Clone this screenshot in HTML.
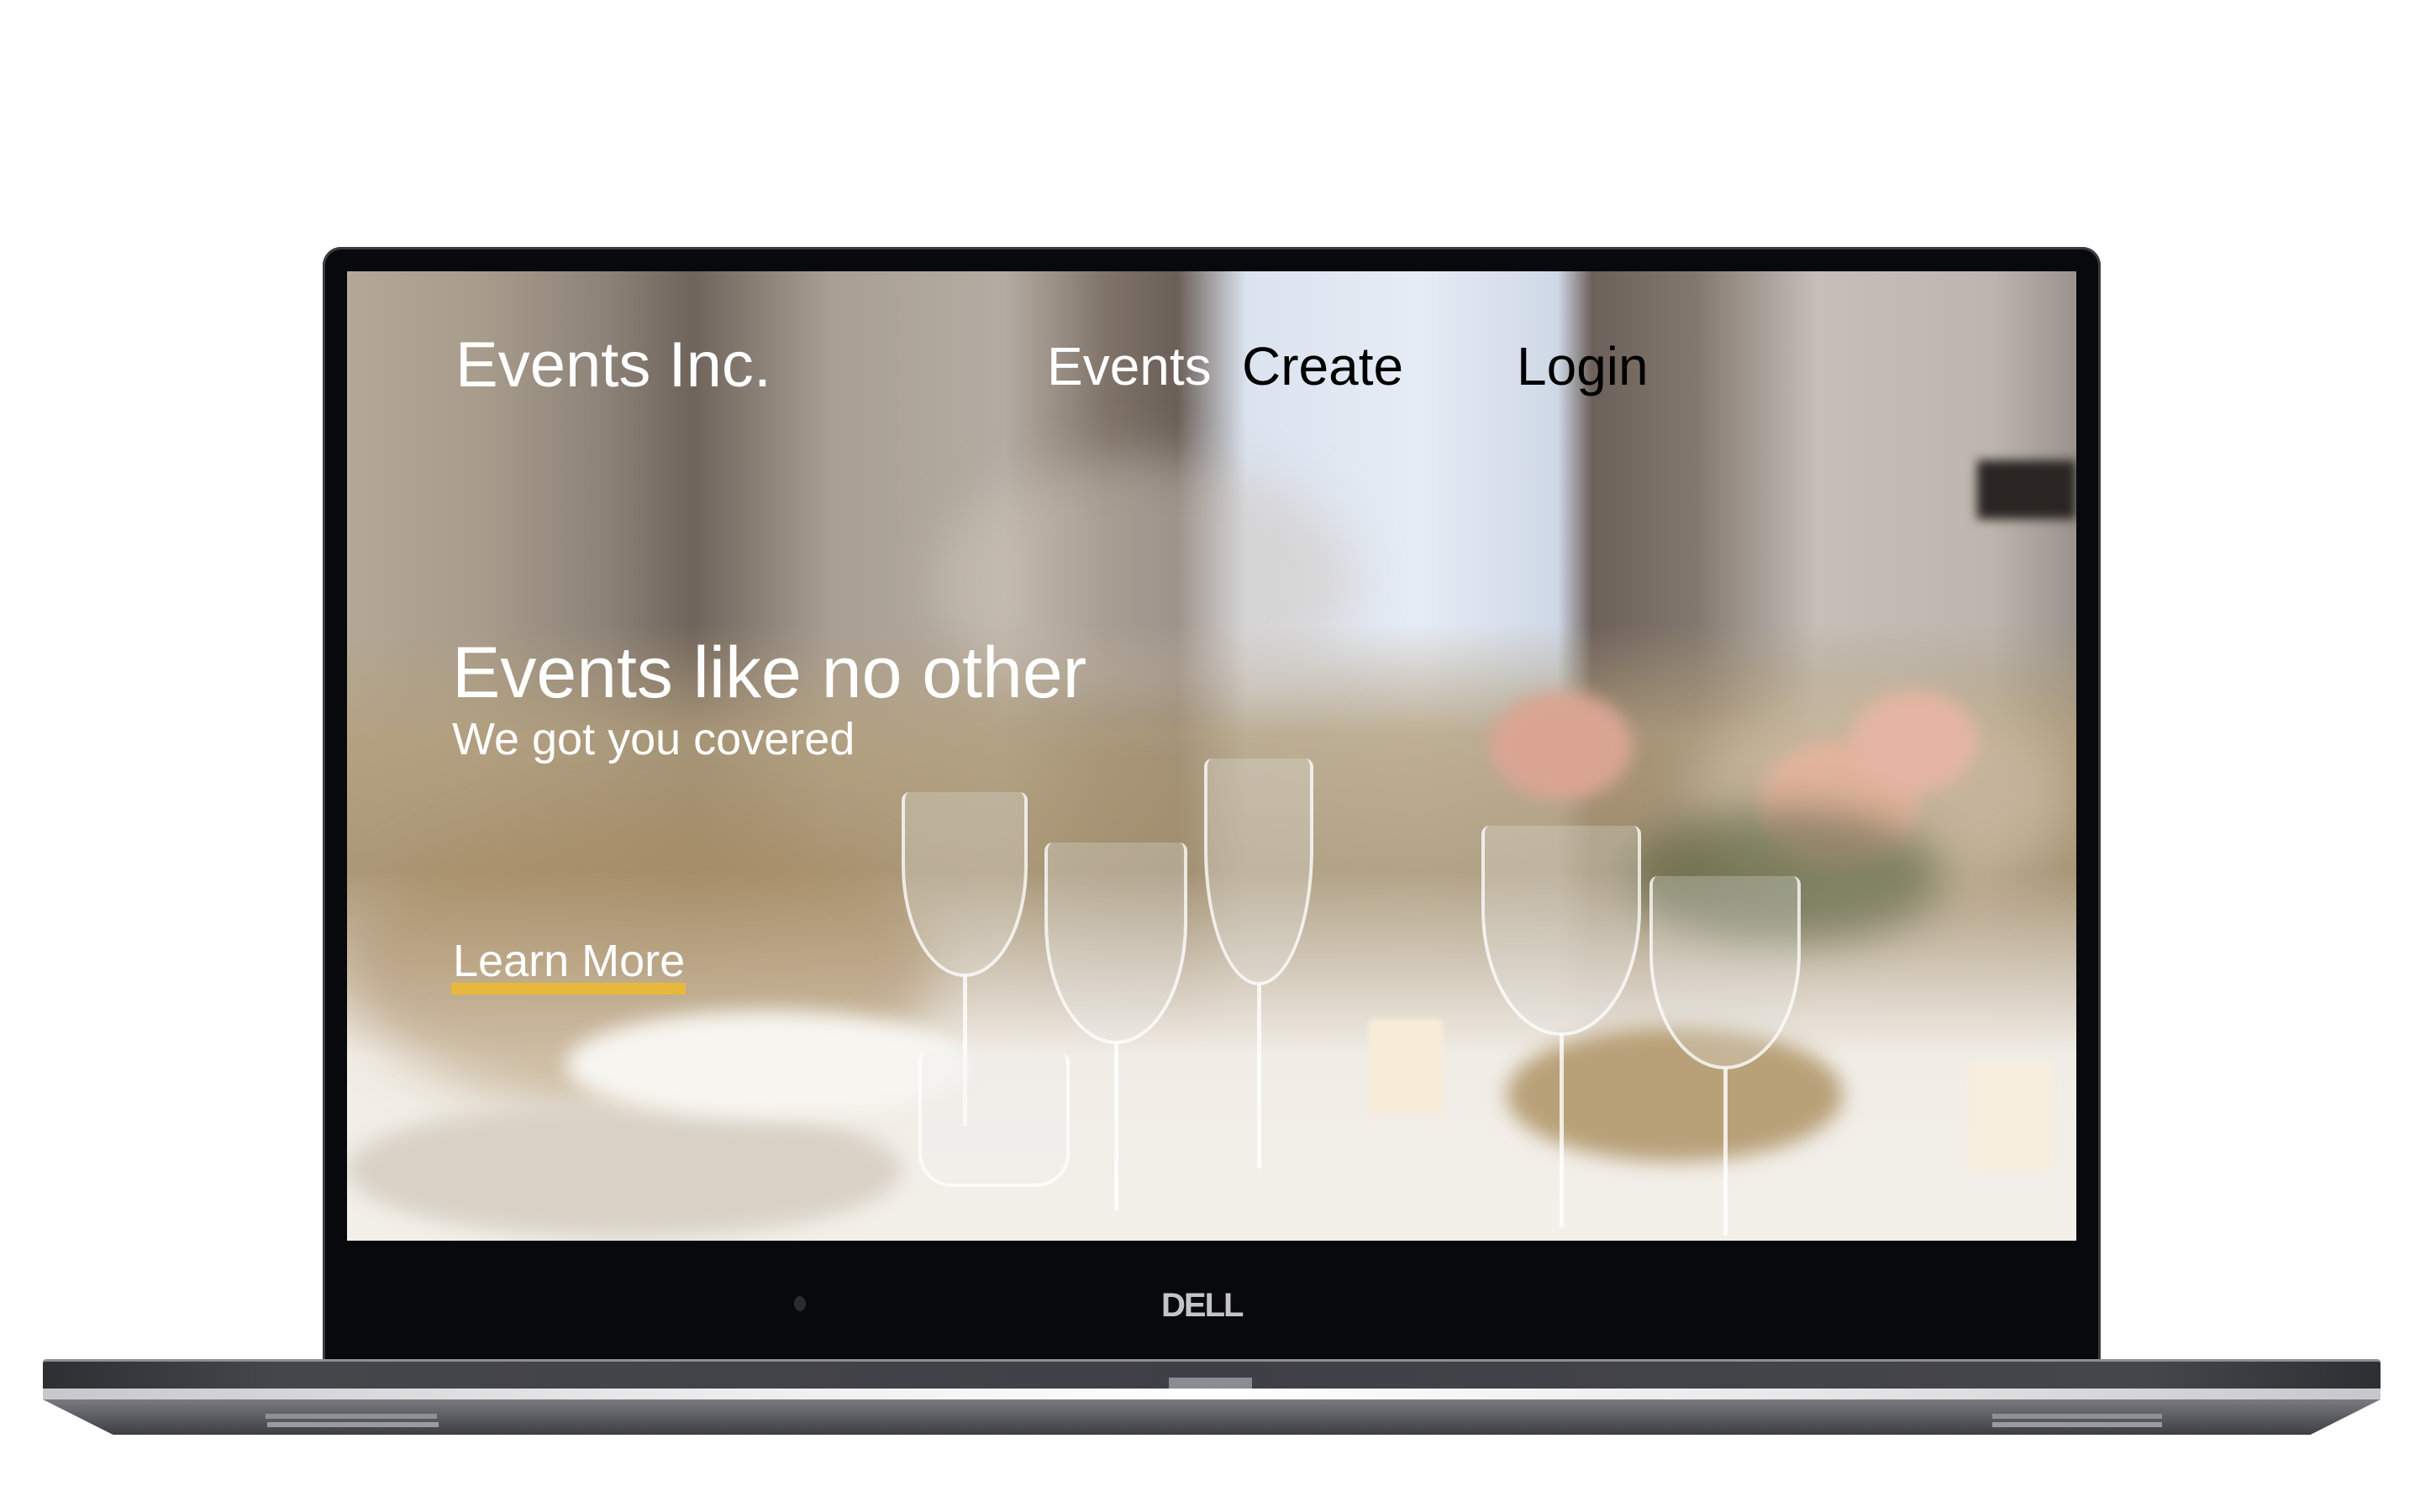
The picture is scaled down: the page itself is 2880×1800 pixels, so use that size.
<!DOCTYPE html>
<html><head><meta charset="utf-8"><style>
*{margin:0;padding:0;box-sizing:border-box}
body{width:2880px;height:1800px;background:#fff;position:relative;overflow:hidden;font-family:"Liberation Sans",Arial,sans-serif}
.abs{position:absolute}
#bezel{left:384px;top:294px;width:2116px;height:1330px;background:#08090c;border-radius:22px 22px 8px 8px;box-shadow:inset 0 0 0 3px #3b3c40}
#screen{left:413px;top:323px;width:2058px;height:1154px;overflow:hidden;background:#cfc6b8}
.b{position:absolute;border-radius:50%;filter:blur(30px)}
.t{position:absolute;white-space:nowrap;line-height:1}
.g{position:absolute;border:4px solid rgba(255,255,255,.75);border-top:none;border-radius:10px 10px 50% 50%/10px 10px 60% 60%;background:rgba(235,238,240,.25)}
.s{position:absolute;width:5px;background:rgba(255,255,255,.8)}
</style></head><body>
<div id="bezel" class="abs"></div>
<div id="screen" class="abs">
  <div class="abs" style="left:0;top:0;width:2058px;height:1154px;background:linear-gradient(90deg,#b3a898 0%,#a79b8b 8%,#8c8278 15%,#6f645b 20%,#a99f94 28%,#b4aca2 38%,#7f7369 44%,#6a5f58 48%,#dbe3ef 52%,#e6ecf5 62%,#cfd8e6 70%,#6c605a 72%,#83786f 78%,#c5bfb8 85%,#bdb6ae 95%,#9a938c 100%)"></div>
  <div class="abs" style="left:0;top:420px;width:2058px;height:734px;background:linear-gradient(180deg,rgba(190,175,150,0) 0%,rgba(180,160,125,.8) 18%,rgba(170,150,115,.85) 40%,rgba(215,205,190,.95) 58%,#f1ede6 70%,#f3f0ea 100%)"></div>
  <div class="b" style="left:700px;top:220px;width:500px;height:300px;background:rgba(210,200,190,.5)"></div>
  <div class="b" style="left:0;top:650px;width:700px;height:350px;background:rgba(170,140,95,.5)"></div>
  <div class="b" style="left:1600px;top:500px;width:450px;height:250px;background:rgba(215,200,180,.5)"></div>
  <div class="abs" style="left:1940px;top:225px;width:118px;height:70px;background:#2a2522;filter:blur(6px)"></div>
  <!-- roses -->
  <div class="b" style="left:1360px;top:500px;width:170px;height:130px;background:#d9a592;filter:blur(10px)"></div>
  <div class="b" style="left:1680px;top:560px;width:190px;height:150px;background:#e2b39c;filter:blur(10px)"></div>
  <div class="b" style="left:1790px;top:500px;width:150px;height:120px;background:#e4b5a2;filter:blur(10px)"></div>
  <div class="b" style="left:1520px;top:640px;width:380px;height:160px;background:#4e5e3c;filter:blur(25px);opacity:.55"></div>
  <!-- basket -->
  <div class="b" style="left:1380px;top:900px;width:400px;height:160px;background:#b8a078;filter:blur(12px)"></div>
  <!-- plates -->
  <div class="b" style="left:0;top:990px;width:660px;height:160px;background:#d8d2c6;filter:blur(12px)"></div>
  <div class="b" style="left:260px;top:880px;width:480px;height:130px;background:#f7f5f0;filter:blur(12px)"></div>
  <!-- glasses -->
  <div class="g" style="left:660px;top:620px;width:150px;height:220px"></div><div class="s" style="left:733px;top:838px;height:180px"></div>
  <div class="g" style="left:830px;top:680px;width:170px;height:240px"></div><div class="s" style="left:913px;top:918px;height:200px"></div>
  <div class="g" style="left:1020px;top:580px;width:130px;height:270px"></div><div class="s" style="left:1083px;top:848px;height:220px"></div>
  <div class="g" style="left:1350px;top:660px;width:190px;height:250px"></div><div class="s" style="left:1443px;top:908px;height:230px"></div>
  <div class="g" style="left:1550px;top:720px;width:180px;height:230px"></div><div class="s" style="left:1638px;top:948px;height:200px"></div>
  <div class="g" style="left:680px;top:930px;width:180px;height:160px;border-radius:10px 10px 40px 40px"></div>
  <!-- candles -->
  <div class="abs" style="left:1215px;top:890px;width:90px;height:115px;background:#f6ecd8;border-radius:8px;filter:blur(3px)"></div>
  <div class="abs" style="left:1930px;top:940px;width:100px;height:130px;background:#f7eedd;border-radius:8px;filter:blur(3px)"></div>

  <div class="t" style="left:129px;top:74px;font-size:76px;color:#fff">Events Inc.</div>
  <div class="t" style="left:833px;top:81px;font-size:64px;color:#fff">Events</div>
  <div class="t" style="left:1065px;top:81px;font-size:64px;color:#000">Create</div>
  <div class="t" style="left:1392px;top:81px;font-size:64px;color:#000">Login</div>
  <div class="t" style="left:125px;top:435px;font-size:86px;color:#fff">Events like no other</div>
  <div class="t" style="left:125px;top:530px;font-size:54px;color:#fff">We got you covered</div>
  <div class="t" style="left:126px;top:794px;font-size:54px;color:#fff">Learn More</div>
  <div class="abs" style="left:124px;top:847px;width:279px;height:14px;background:#e8b83a"></div>
</div>
<div class="abs" style="left:945px;top:1543px;width:14px;height:18px;border-radius:50%;background:#2a2b2f"></div>
<div class="t" style="left:1382px;top:1534px;font-size:40px;font-weight:bold;color:#c4c4c8;letter-spacing:-2px">DELL</div>
<div class="abs" style="left:51px;top:1618px;width:2782px;height:36px;background:linear-gradient(90deg,#2e2f33,#45464b 10%,#3f4045 50%,#45464b 90%,#2e2f33);border-top:3px solid #8e8f94;border-radius:4px 4px 0 0"></div>
<div class="abs" style="left:1391px;top:1640px;width:99px;height:13px;background:#8b8c92"></div>
<div class="abs" style="left:51px;top:1653px;width:2782px;height:13px;background:linear-gradient(90deg,#c8c8cc,#ededf0 30%,#fff 50%,#ededf0 70%,#c8c8cc)"></div>
<div class="abs" style="left:51px;top:1666px;width:2782px;height:42px;background:linear-gradient(180deg,#7a7b80,#55565b 60%,#3d3e42);clip-path:polygon(0 0,100% 0,97% 100%,3% 100%);border-radius:0 0 30px 30px"></div>
<div class="abs" style="left:316px;top:1683px;width:204px;height:6px;background:#8f9095"></div>
<div class="abs" style="left:318px;top:1693px;width:204px;height:6px;background:#9a9ba0"></div>
<div class="abs" style="left:2371px;top:1683px;width:202px;height:6px;background:#8f9095"></div>
<div class="abs" style="left:2371px;top:1693px;width:202px;height:6px;background:#9a9ba0"></div>
</body></html>
